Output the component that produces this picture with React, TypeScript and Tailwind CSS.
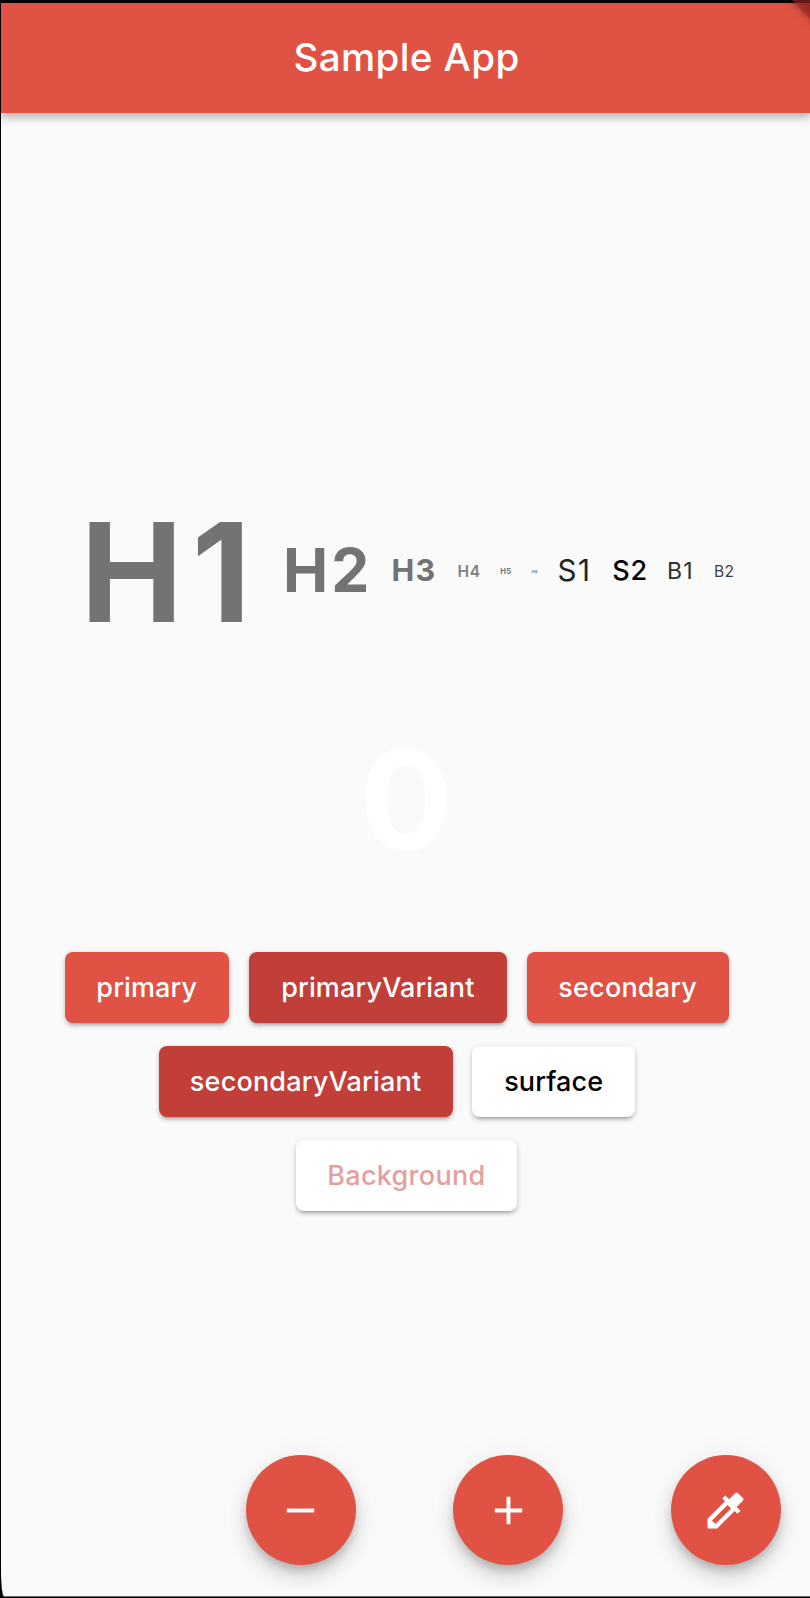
import React from "react";

const samples = [
  { text: "H1", cls: "w-[202.5px] text-[137px] font-bold tracking-[9px] text-[#737373] pt-[2px]" },
  { text: "H2", cls: "w-[108.5px] text-[60.5px] font-bold tracking-[3px] text-[#737373] pb-[1px]" },
  { text: "H3", cls: "w-[65.5px] text-[30.5px] font-bold tracking-[1.3px] text-[#737373] pb-[1px]" },
  { text: "H4", cls: "w-[43.3px] text-[15.5px] font-semibold tracking-[0.6px] text-[#808080] pl-[0.5px] pt-[2px]" },
  { text: "H5", cls: "w-[30.9px] text-[7.7px] font-bold tracking-[0.3px] text-[#737373] pt-[2px]" },
  { text: "H6", cls: "w-[26.3px] text-[3.8px] font-bold tracking-[0.3px] text-[#737373] pl-[0.6px] pt-[2px]" },
  { text: "S1", cls: "w-[54.2px] text-[29.5px] font-normal tracking-[1.5px] text-[#212121]" },
  { text: "S2", cls: "w-[55.3px] text-[27px] font-medium tracking-[0.8px] text-black pb-[1px] pl-[0.5px]" },
  { text: "B1", cls: "w-[47px] text-[23px] font-normal tracking-[1.2px] text-[#303030]" },
  { text: "B2", cls: "w-[24px] text-[15.5px] font-normal tracking-[0.3px] text-[#404040] pt-[2px]" },
];

const buttonRows = [
  {
    cls: "pr-[19.6px]",
    items: [
      { text: "primary", cls: "w-[164.5px] bg-[#e05243] text-white tracking-[0.12px]" },
      { text: "primaryVariant", cls: "w-[258.5px] bg-[#c23e39] text-white tracking-[0.14px]" },
      { text: "secondary", cls: "w-[202px] bg-[#e05243] text-white tracking-[0.2px]" },
    ],
  },
  {
    cls: "pr-[19px]",
    items: [
      { text: "secondaryVariant", cls: "w-[294px] bg-[#c23e39] text-white tracking-[0.2px]" },
      { text: "surface", cls: "w-[163px] bg-white text-black tracking-[0.1px]" },
    ],
  },
  {
    cls: "",
    items: [{ text: "Background", cls: "w-[221px] bg-white text-[#e59f9e] tracking-[0.3px]" }],
  },
];

const fabs = [
  { name: "Decrease", cls: "mr-[97.3px] pr-px", stroke: 0, d: "M19 13H5v-2h14v2z" },
  { name: "Increase", cls: "mr-[107.7px]", stroke: 0, d: "M19 13h-6v6h-2v-6H5v-2h6V5h2v6h6v2z" },
  {
    name: "Pick color",
    cls: "pr-px",
    stroke: 0.3,
    d: "M20.71 5.63l-2.34-2.34c-.39-.39-1.02-.39-1.41 0l-3.12 3.12-1.93-1.91-1.41 1.41 1.42 1.42L3 16.25V21h4.75l8.92-8.92 1.42 1.42 1.41-1.41-1.92-1.92 3.12-3.12c.4-.4.4-1.03.01-1.42zM6.92 19L5 17.08l8.06-8.06 1.92 1.92L6.92 19z",
  },
];

export default function App() {
  return (
    <div className="relative h-[1598px] w-[810px] overflow-hidden bg-black pt-[3px] pl-px font-[Inter,sans-serif]">
      <div className="flex h-[1594px] w-full flex-col overflow-hidden rounded-bl-[3px_26px] border-b border-[#66666a] bg-[#fafafa]">
        <header className="z-10 flex h-[109.5px] shrink-0 items-center justify-center bg-[#e05243] pb-px pl-[2px] shadow-[0_2px_8px_1px_rgba(0,0,0,0.2),0_6px_10px_rgba(0,0,0,0.12)]">
          <h1 className="text-[38.5px] leading-none font-medium tracking-[0.4px] text-white">Sample App</h1>
        </header>

        <main className="flex flex-1 flex-col">
          <div className="mt-[378.5px] ml-[79.5px] flex h-[160px] items-center whitespace-nowrap">
            {samples.map((s) => (
              <span key={s.text} className={`shrink-0 leading-none ${s.cls}`}>
                {s.text}
              </span>
            ))}
          </div>

          <div className="mt-[68.5px] flex h-[160px] items-center justify-center pl-[1px] text-[138px] leading-none font-bold text-white">
            0
          </div>

          <div className="mt-[72.8px] flex flex-col gap-[23.5px] pl-[1.8px]">
            {buttonRows.map((row, i) => (
              <div key={i} className={`flex justify-center gap-[19.6px] ${row.cls}`}>
                {row.items.map((b) => (
                  <button
                    key={b.text}
                    className={`flex h-[70.5px] shrink-0 items-center justify-center rounded-[8px] pb-[1px] text-[27px] leading-none font-medium shadow-[0_5px_3px_-4px_rgba(0,0,0,0.2),0_3px_4px_rgba(0,0,0,0.16),0_1px_6px_rgba(0,0,0,0.1)] ${b.cls}`}
                  >
                    {b.text}
                  </button>
                ))}
              </div>
            ))}
          </div>

          <div className="mt-auto mr-[29px] mb-[31px] flex justify-end">
            {fabs.map((f) => (
              <button
                key={f.name}
                aria-label={f.name}
                className={`flex size-[110px] items-center justify-center rounded-full bg-[#e05243] text-white shadow-[0_6px_10px_-2px_rgba(0,0,0,0.2),0_12px_20px_rgba(0,0,0,0.14),0_2px_36px_rgba(0,0,0,0.05)] ${f.cls}`}
              >
                <svg viewBox="0 0 24 24" className="size-[47px]" fill="currentColor" stroke="currentColor" strokeWidth={f.stroke}>
                  <path d={f.d} />
                </svg>
              </button>
            ))}
          </div>
        </main>
      </div>

      <svg className="absolute top-0 right-0 z-20" width="40" height="40" viewBox="0 0 40 40">
        <defs>
          <filter id="soft" x="-50%" y="-50%" width="200%" height="200%">
            <feGaussianBlur stdDeviation="4.5" />
          </filter>
        </defs>
        <path d="M22 -1 L60 37 V-20 H3 Z" fill="#000" fillOpacity="0.5" filter="url(#soft)" />
        <path d="M22 0 L40 18 V0 Z" fill="#a82a26" fillOpacity="0.6" />
      </svg>
    </div>
  );
}
